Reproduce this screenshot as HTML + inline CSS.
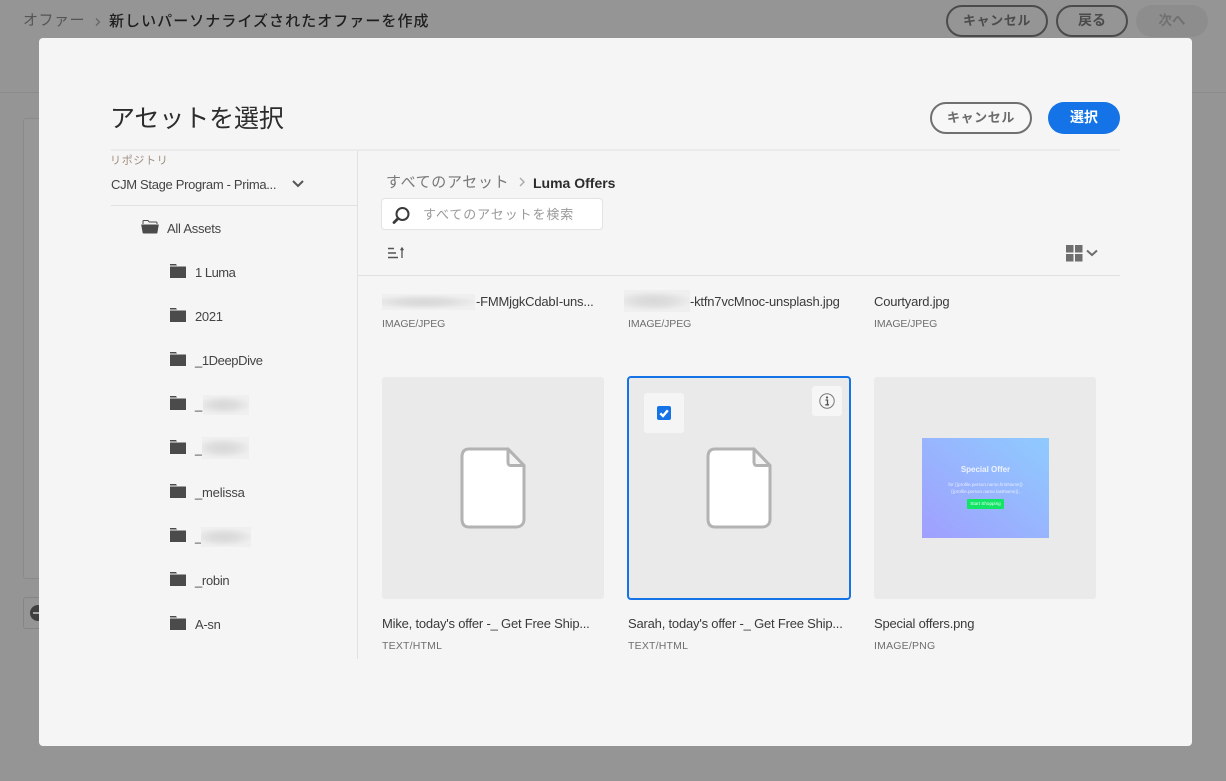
<!DOCTYPE html>
<html lang="ja"><head><meta charset="utf-8"><title>アセットを選択</title>
<style>
html,body{margin:0;padding:0;width:1226px;height:781px;overflow:hidden;background:#959595}
body{position:relative;font-family:"Liberation Sans","Noto Sans CJK JP",sans-serif;color:#2c2c2c}
.t,.a{position:absolute;white-space:nowrap}
.t{line-height:20px;height:20px}
.btn{position:absolute;box-sizing:border-box;height:32px;border-radius:16px;border:2px solid #707070;color:#6b6b6b;font-size:13px;font-weight:700;text-align:center;line-height:27px;letter-spacing:.6px}
.top{border-color:#4b4b4b;color:#4b4b4b}
.fn{font-size:13px;color:#3a3a3a;letter-spacing:-.2px}
.ty{font-size:10.5px;color:#6e6e6e;letter-spacing:.2px}
.rl{font-size:13px;color:#444;letter-spacing:-.3px}
.tile{position:absolute;width:222px;height:222px;background:#eaeaea;border-radius:3px}
.blur{position:absolute;background:radial-gradient(ellipse 60% 45% at 45% 50%,#d8d8d8 0%,#dedede 45%,#efefef 100%)}
svg{position:absolute;display:block}
</style></head><body>

<!-- background page -->
<div class="t" style="left:23px;top:11px;font-size:15px;letter-spacing:.5px;color:#555">オファー</div>
<svg style="left:94px;top:17px" width="8" height="10" viewBox="0 0 8 10"><path d="M2 1.5 5.5 5 2 8.5" fill="none" stroke="#666" stroke-width="1.3"/></svg>
<div class="t" style="left:109px;top:12px;font-size:15px;letter-spacing:1.05px;color:#1e1e1e;font-weight:500">新しいパーソナライズされたオファーを作成</div>
<div class="btn top" style="left:946px;top:5px;width:102px">キャンセル</div>
<div class="btn top" style="left:1056px;top:5px;width:72px;font-size:14px;letter-spacing:0">戻る</div>
<div class="a" style="left:1136px;top:5px;width:72px;height:32px;border-radius:16px;background:#8d8d8d;color:#707070;font-size:13.5px;font-weight:700;text-align:center;line-height:32px">次へ</div>
<div class="a" style="left:0;top:92px;width:1226px;height:1px;background:#8b8b8b"></div>
<div class="a" style="left:23px;top:118px;width:40px;height:461px;box-sizing:border-box;border:1px solid #8a8a8a;border-radius:3px;background:#979797"></div>
<div class="a" style="left:23px;top:597px;width:40px;height:32px;box-sizing:border-box;border:1px solid #858585;border-radius:3px"></div>
<div class="a" style="left:30px;top:605px;width:16px;height:16px;border-radius:50%;background:#3f3f3f"></div>
<div class="a" style="left:33px;top:612px;width:6px;height:2px;background:#a5a5a5"></div>

<!-- modal -->
<div class="a" style="left:39px;top:38px;width:1153px;height:708px;background:#f5f5f5;border-radius:4px"></div>
<div class="t" style="left:110px;top:100px;height:36px;line-height:36px;font-size:25px;color:#2c2c2c;margin-top:1px;letter-spacing:-.1px">アセットを選択</div>
<div class="btn" style="left:930px;top:102px;width:102px;height:32px;background:#f7f7f7">キャンセル</div>
<div class="a" style="left:1048px;top:102px;width:72px;height:32px;border-radius:16px;background:#1473e6;color:#fff;font-size:14px;font-weight:700;text-align:center;line-height:30px">選択</div>
<div class="a" style="left:111px;top:149px;width:1009px;height:2px;background:#ebebeb"></div>
<div class="a" style="left:357px;top:151px;width:1px;height:508px;background:#e1e1e1"></div>

<!-- left rail -->
<div class="t" style="left:110px;top:151px;font-size:11px;color:#a08e80;letter-spacing:.7px">リポジトリ</div>
<div class="t rl" style="left:111px;top:175px;letter-spacing:-.32px">CJM Stage Program - Prima...</div>
<svg style="left:291px;top:179px" width="14" height="10" viewBox="0 0 14 10"><path d="M2 2 7 7 12 2" fill="none" stroke="#555" stroke-width="2"/></svg>
<div class="a" style="left:111px;top:205px;width:246px;height:1px;background:#e1e1e1"></div>

<svg style="left:141px;top:219px" width="18" height="16" viewBox="0 0 18 16"><path d="M2 5V2.200C2 1.600 2.400 1.500 3 1.500H7L8.200 3H15C15.600 3 16 3.300 16 4V5" fill="none" stroke="#4b4b4b" stroke-width="1"/><path d="M0.200 5.500H17.800L16.400 13.800C16.300 14.300 16 14.500 15.400 14.500H2.600C2 14.500 1.700 14.300 1.600 13.800Z" fill="#4b4b4b"/></svg>
<div class="t rl" style="left:167px;top:219px;letter-spacing:-.25px">All Assets</div>

<svg style="left:170px;top:264px" width="16" height="15" viewBox="0 0 16 15"><path d="M0 0h6l1 1.500H0zM0 2.500h16V14H0z" fill="#4b4b4b"/></svg>
<div class="t rl" style="left:195px;top:263px;letter-spacing:-.5px">1 Luma</div>
<svg style="left:170px;top:308px" width="16" height="15" viewBox="0 0 16 15"><path d="M0 0h6l1 1.500H0zM0 2.500h16V14H0z" fill="#4b4b4b"/></svg>
<div class="t rl" style="left:195px;top:307px">2021</div>
<svg style="left:170px;top:352px" width="16" height="15" viewBox="0 0 16 15"><path d="M0 0h6l1 1.500H0zM0 2.500h16V14H0z" fill="#4b4b4b"/></svg>
<div class="t rl" style="left:195px;top:351px;letter-spacing:-.4px">_1DeepDive</div>
<svg style="left:170px;top:396px" width="16" height="15" viewBox="0 0 16 15"><path d="M0 0h6l1 1.500H0zM0 2.500h16V14H0z" fill="#4b4b4b"/></svg>
<div class="t rl" style="left:195px;top:395px">_</div>
<div class="blur" style="left:203px;top:395px;width:46px;height:20px"></div>
<svg style="left:170px;top:440px" width="16" height="15" viewBox="0 0 16 15"><path d="M0 0h6l1 1.500H0zM0 2.500h16V14H0z" fill="#4b4b4b"/></svg>
<div class="t rl" style="left:195px;top:439px">_</div>
<div class="blur" style="left:202px;top:437px;width:47px;height:22px"></div>
<svg style="left:170px;top:484px" width="16" height="15" viewBox="0 0 16 15"><path d="M0 0h6l1 1.500H0zM0 2.500h16V14H0z" fill="#4b4b4b"/></svg>
<div class="t rl" style="left:195px;top:483px;letter-spacing:-.2px">_melissa</div>
<svg style="left:170px;top:528px" width="16" height="15" viewBox="0 0 16 15"><path d="M0 0h6l1 1.500H0zM0 2.500h16V14H0z" fill="#4b4b4b"/></svg>
<div class="t rl" style="left:195px;top:527px">_</div>
<div class="blur" style="left:201px;top:527px;width:50px;height:20px"></div>
<svg style="left:170px;top:572px" width="16" height="15" viewBox="0 0 16 15"><path d="M0 0h6l1 1.500H0zM0 2.500h16V14H0z" fill="#4b4b4b"/></svg>
<div class="t rl" style="left:195px;top:571px">_robin</div>
<svg style="left:170px;top:616px" width="16" height="15" viewBox="0 0 16 15"><path d="M0 0h6l1 1.500H0zM0 2.500h16V14H0z" fill="#4b4b4b"/></svg>
<div class="t rl" style="left:195px;top:615px">A-sn</div>

<!-- content header -->
<div class="t" style="left:386px;top:173px;font-size:15px;color:#787878;letter-spacing:.65px">すべてのアセット</div>
<svg style="left:518px;top:177px" width="8" height="10" viewBox="0 0 8 10"><path d="M2 1 6 5 2 9" fill="none" stroke="#aaa" stroke-width="1.400"/></svg>
<div class="t" style="left:533px;top:173px;font-size:14px;font-weight:700;color:#2c2c2c;letter-spacing:0">Luma Offers</div>
<div class="a" style="left:381px;top:198px;width:222px;height:32px;box-sizing:border-box;background:#fff;border:1px solid #e3e3e3;border-radius:4px"></div>
<svg style="left:392px;top:206px" width="20" height="19" viewBox="0 0 20 19"><circle cx="10.500" cy="8" r="6" fill="none" stroke="#3a3a3a" stroke-width="2"/><path d="M6 12.500 2 16.500" fill="none" stroke="#3a3a3a" stroke-width="2.800" stroke-linecap="round"/></svg>
<div class="t" style="left:423px;top:205px;font-size:13px;color:#9a9a9a;letter-spacing:.9px">すべてのアセットを検索</div>
<svg style="left:387px;top:246px" width="20" height="14" viewBox="0 0 20 14"><path d="M1 2.500H7M1 7H9M1 11.500H11" stroke="#555" stroke-width="1.600" fill="none"/><path d="M15 12V3M13.600 4.200 15 2 16.400 4.200" stroke="#555" stroke-width="1.300" fill="none"/></svg>
<svg style="left:1066px;top:245px" width="34" height="17" viewBox="0 0 34 17"><path d="M0 0h7.500v7.500H0zM9 0h7.500v7.500H9zM0 9h7.500v7.500H0zM9 9h7.500v7.500H9z" fill="#6e6e6e"/><path d="M21 5.500 26 10 31 5.500" fill="none" stroke="#6e6e6e" stroke-width="2"/></svg>
<div class="a" style="left:358px;top:275px;width:762px;height:1px;background:#e1e1e1"></div>

<!-- row 1 -->
<div class="blur" style="left:382px;top:294px;width:93px;height:16px"></div>
<div class="t fn" style="left:476px;top:292px">-FMMjgkCdabI-uns...</div>
<div class="t ty" style="left:382px;top:314px;letter-spacing:-.1px">IMAGE/JPEG</div>
<div class="blur" style="left:624px;top:290px;width:66px;height:22px"></div>
<div class="t fn" style="left:690px;top:292px">-ktfn7vcMnoc-unsplash.jpg</div>
<div class="t ty" style="left:628px;top:314px;letter-spacing:-.1px">IMAGE/JPEG</div>
<div class="t fn" style="left:874px;top:292px">Courtyard.jpg</div>
<div class="t ty" style="left:874px;top:314px;letter-spacing:-.1px">IMAGE/JPEG</div>

<!-- row 2 -->
<div class="tile" style="left:382px;top:377px"></div>
<svg style="left:460px;top:447px" width="66" height="82" viewBox="0 0 66 82"><path d="M9 2H48L64 18.500V72C64 77 61 80 56 80H9C4 80 2 77 2 72V10C2 5 4 2 9 2Z" fill="#fff" stroke="#b3b3b3" stroke-width="3"/><path d="M48 2V15C48 17.500 49 18.500 51 18.500H64Z" fill="#f5f5f5" stroke="#b3b3b3" stroke-width="3" stroke-linejoin="round"/></svg>
<div class="t fn" style="left:382px;top:614px">Mike, today's offer -_ Get Free Ship...</div>
<div class="t ty" style="left:382px;top:636px">TEXT/HTML</div>

<div class="tile" style="left:627px;top:376px;width:224px;height:224px;box-sizing:border-box;border:2px solid #1473e6;border-radius:4px"></div>
<div class="a" style="left:644px;top:393px;width:40px;height:40px;background:#f5f5f5;border-radius:3px"></div>
<div class="a" style="left:657px;top:406px;width:14px;height:14px;background:#1473e6;border-radius:2px"></div>
<svg style="left:657px;top:406px" width="14" height="14" viewBox="0 0 14 14"><path d="M3.300 7.300 6 10 10.800 4.300" fill="none" stroke="#fff" stroke-width="2.400"/></svg>
<div class="a" style="left:812px;top:386px;width:30px;height:30px;background:#f6f6f6;border-radius:3px"></div>
<svg style="left:819px;top:393px" width="16" height="16" viewBox="0 0 16 16"><circle cx="8" cy="8" r="7.200" fill="none" stroke="#777" stroke-width="1"/><path d="M6.500 7H8.500V11.500M6.300 11.800H10" fill="none" stroke="#555" stroke-width="1.300"/><circle cx="8" cy="4.500" r="1.100" fill="#555"/></svg>
<svg style="left:706px;top:447px" width="66" height="82" viewBox="0 0 66 82"><path d="M9 2H48L64 18.500V72C64 77 61 80 56 80H9C4 80 2 77 2 72V10C2 5 4 2 9 2Z" fill="#fff" stroke="#b3b3b3" stroke-width="3"/><path d="M48 2V15C48 17.500 49 18.500 51 18.500H64Z" fill="#f5f5f5" stroke="#b3b3b3" stroke-width="3" stroke-linejoin="round"/></svg>
<div class="t fn" style="left:628px;top:614px;letter-spacing:-.2px">Sarah, today's offer -_ Get Free Ship...</div>
<div class="t ty" style="left:628px;top:636px">TEXT/HTML</div>

<div class="tile" style="left:874px;top:377px"></div>
<div class="a" style="left:922px;top:438px;width:127px;height:100px;background:linear-gradient(to top right,#a09ffe,#8fcbfe)"></div>
<div class="a" style="left:922px;top:465px;width:127px;text-align:center;font-size:8px;font-weight:700;color:#eef3ff;line-height:10px">Special Offer</div>
<div class="a" style="left:922px;top:481px;width:127px;text-align:center;font-size:4.6px;color:#e6ecff;line-height:7px">for {{profile.person.name.firstName}}<br>{{profile.person.name.lastName}},</div>
<div class="a" style="left:967px;top:499px;width:37px;height:10px;background:#12e465;border-radius:1px;color:#e8fff0;font-size:4.6px;line-height:10px;text-align:center">Start Shopping</div>
<div class="t fn" style="left:874px;top:614px">Special offers.png</div>
<div class="t ty" style="left:874px;top:636px">IMAGE/PNG</div>
</body></html>
